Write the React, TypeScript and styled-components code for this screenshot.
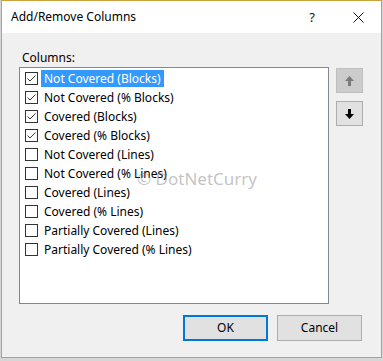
import React, { useState } from 'react';
import styled, { createGlobalStyle } from 'styled-components';

const GlobalStyle = createGlobalStyle`
  html, body {
    margin: 0;
    padding: 0;
    background: #d6d6d6;
  }
  body {
    font-family: "Segoe UI", "Noto Sans", "Liberation Sans", sans-serif;
    font-size: 12px;
    color: #000;
  }
`;

const Window = styled.div`
  width: 381px;
  height: 358px;
  margin-left: 1px;
  border: 1px solid #c9a23c;
  border-left-width: 1px;
  background: #f0f0f0;
  display: flex;
  flex-direction: column;
  box-sizing: border-box;
`;

const TitleBar = styled.div`
  height: 32px;
  background: #fff;
  display: flex;
  align-items: center;
  padding-left: 9px;
  flex-shrink: 0;
`;

const Title = styled.div`
  flex: 1;
  font-size: 12px;
  padding-bottom: 1px;
`;

const TitleButton = styled.div`
  width: 46px;
  height: 32px;
  display: flex;
  align-items: center;
  justify-content: center;
  font-size: 13px;
  color: #111;
`;

const Body = styled.div`
  padding: 17px 0 0 17px;
  display: grid;
  grid-template-columns: 310px 27px;
  column-gap: 7px;
`;

const Label = styled.div`
  grid-column: 1 / 3;
  height: 17px;
  padding-left: 3px;
  line-height: 15px;
`;

const ListBox = styled.div`
  position: relative;
  height: 237px;
  box-sizing: border-box;
  border: 1px solid #828790;
  background: #fff;
  padding-top: 1px;
`;

const Row = styled.div`
  height: 19px;
  display: flex;
  align-items: center;
  padding-left: 5px;
`;

const Box = styled.div`
  width: 13px;
  height: 13px;
  box-sizing: border-box;
  border: 1px solid #333;
  background: #fff;
  display: flex;
  align-items: center;
  justify-content: center;
  margin-right: 3px;
`;

const ItemText = styled.div<{ $selected?: boolean }>`
  height: 17px;
  line-height: 16px;
  padding: 0 2px;
  box-sizing: border-box;
  background: ${p => (p.$selected ? '#3399ff' : 'transparent')};
  color: ${p => (p.$selected ? '#fff' : '#000')};
  border: 1px dotted ${p => (p.$selected ? '#cc7a00' : 'transparent')};
  white-space: nowrap;
`;

const Watermark = styled.div`
  position: absolute;
  left: 117px;
  top: 99px;
  font-size: 17px;
  color: rgba(120, 120, 120, 0.45);
  pointer-events: none;
  white-space: nowrap;
`;

const SideButtons = styled.div`
  display: flex;
  flex-direction: column;
  gap: 8px;
  padding-top: 1px;
`;

const ArrowButton = styled.div<{ $disabled?: boolean }>`
  width: 27px;
  height: 25px;
  box-sizing: border-box;
  border: 1px solid ${p => (p.$disabled ? '#bfbfbf' : '#adadad')};
  background: ${p => (p.$disabled ? '#cccccc' : '#e1e1e1')};
  display: flex;
  align-items: center;
  justify-content: center;
`;

const Footer = styled.div`
  display: flex;
  justify-content: flex-end;
  gap: 9px;
  padding: 11px 19px 0 0;
`;

const Button = styled.div<{ $default?: boolean }>`
  width: 85px;
  height: 26px;
  box-sizing: border-box;
  border: ${p => (p.$default ? '2px solid #0078d7' : '1px solid #adadad')};
  background: #e1e1e1;
  display: flex;
  align-items: center;
  justify-content: center;
  padding-bottom: 1px;
`;

const items = [
  { label: 'Not Covered (Blocks)', checked: true },
  { label: 'Not Covered (% Blocks)', checked: true },
  { label: 'Covered (Blocks)', checked: true },
  { label: 'Covered (% Blocks)', checked: true },
  { label: 'Not Covered (Lines)', checked: false },
  { label: 'Not Covered (% Lines)', checked: false },
  { label: 'Covered (Lines)', checked: false },
  { label: 'Covered (% Lines)', checked: false },
  { label: 'Partially Covered (Lines)', checked: false },
  { label: 'Partially Covered (% Lines)', checked: false },
];

const Check = () => (
  <svg width="11" height="11" viewBox="0 0 11 11">
    <polyline points="1.5,5.5 4,8 9.5,2.5" fill="none" stroke="#333" strokeWidth="1" />
  </svg>
);

const Arrow = ({ up, color }: { up?: boolean; color: string }) => (
  <svg width="9" height="10" viewBox="0 0 9 10" style={{ transform: up ? 'none' : 'rotate(180deg)' }}>
    <polygon points="4.5,0 9,5 6,5 6,10 3,10 3,5 0,5" fill={color} />
  </svg>
);

export default function App() {
  const [list] = useState(items);

  return (
    <>
      <GlobalStyle />
      <Window>
        <TitleBar>
          <Title>Add/Remove Columns</Title>
          <TitleButton>?</TitleButton>
          <TitleButton>
            <svg width="11" height="11" viewBox="0 0 11 11">
              <path d="M0.5 0.5 L10.5 10.5 M10.5 0.5 L0.5 10.5" stroke="#111" strokeWidth="1" />
            </svg>
          </TitleButton>
        </TitleBar>
        <Body>
          <Label>Columns:</Label>
          <ListBox>
            {list.map((item, i) => (
              <Row key={item.label}>
                <Box>{item.checked && <Check />}</Box>
                <ItemText $selected={i === 0}>{item.label}</ItemText>
              </Row>
            ))}
            <Watermark>© DotNetCurry</Watermark>
          </ListBox>
          <SideButtons>
            <ArrowButton $disabled>
              <Arrow up color="#7a7a7a" />
            </ArrowButton>
            <ArrowButton>
              <Arrow color="#000" />
            </ArrowButton>
          </SideButtons>
        </Body>
        <Footer>
          <Button $default>OK</Button>
          <Button>Cancel</Button>
        </Footer>
      </Window>
    </>
  );
}
